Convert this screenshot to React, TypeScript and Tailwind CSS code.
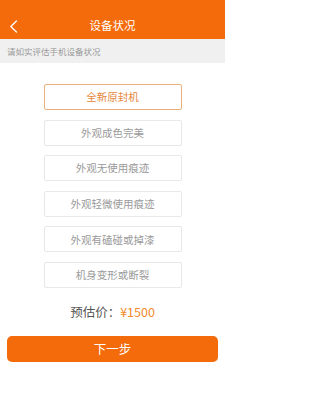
import React from "react";

const options = [
  "外观成色完美",
  "外观无使用痕迹",
  "外观轻微使用痕迹",
  "外观有磕碰或掉漆",
  "机身变形或断裂",
];

export default function App() {
  return (
    <div
      className="w-[225px] h-[400px] bg-white overflow-hidden flex flex-col"
      style={{ fontFamily: '"Noto Sans CJK SC", "Noto Sans", sans-serif' }}
    >
      <div className="h-[39px] bg-[#f46b0c] relative flex items-center justify-center pt-[13px]">
        <svg
          className="absolute left-[9px] top-[20px]"
          width="9"
          height="13"
          viewBox="0 0 9 13"
          fill="none"
        >
          <path d="M7.5 1 L1.8 6.5 L7.5 12" stroke="white" strokeWidth="1.3" strokeLinecap="round" strokeLinejoin="round" />
        </svg>
        <span className="text-white text-[11.5px] leading-none">设备状况</span>
      </div>
      <div className="h-[24px] bg-[#f0f0f0] flex items-center pl-[7px]">
        <span className="text-[8.5px] text-[#9a9a9a] leading-none">请如实评估手机设备状况</span>
      </div>
      <div className="mt-[21px] flex flex-col items-center gap-[9.6px]">
        <div className="w-[138px] h-[26px] border border-[#eab17c] rounded-[2px] flex items-center justify-center text-[10.5px] text-[#e5873a]">
          全新原封机
        </div>
        {options.map((o) => (
          <div
            key={o}
            className="w-[138px] h-[26px] border border-[#e8e8e8] rounded-[2px] flex items-center justify-center text-[10.5px] text-[#9a9a9a]"
          >
            {o}
          </div>
        ))}
      </div>
      <div className="mt-[16px] h-[16px] flex items-center justify-center text-[12.5px] leading-none">
        <span className="text-[#555]">预估价：</span>
        <span className="text-[#f08a2a]">¥1500</span>
      </div>
      <div className="mt-[16px] mx-[7px] h-[26px] bg-[#f46b0c] rounded-[5px] flex items-center justify-center text-white text-[12.5px]">
        下一步
      </div>
    </div>
  );
}
